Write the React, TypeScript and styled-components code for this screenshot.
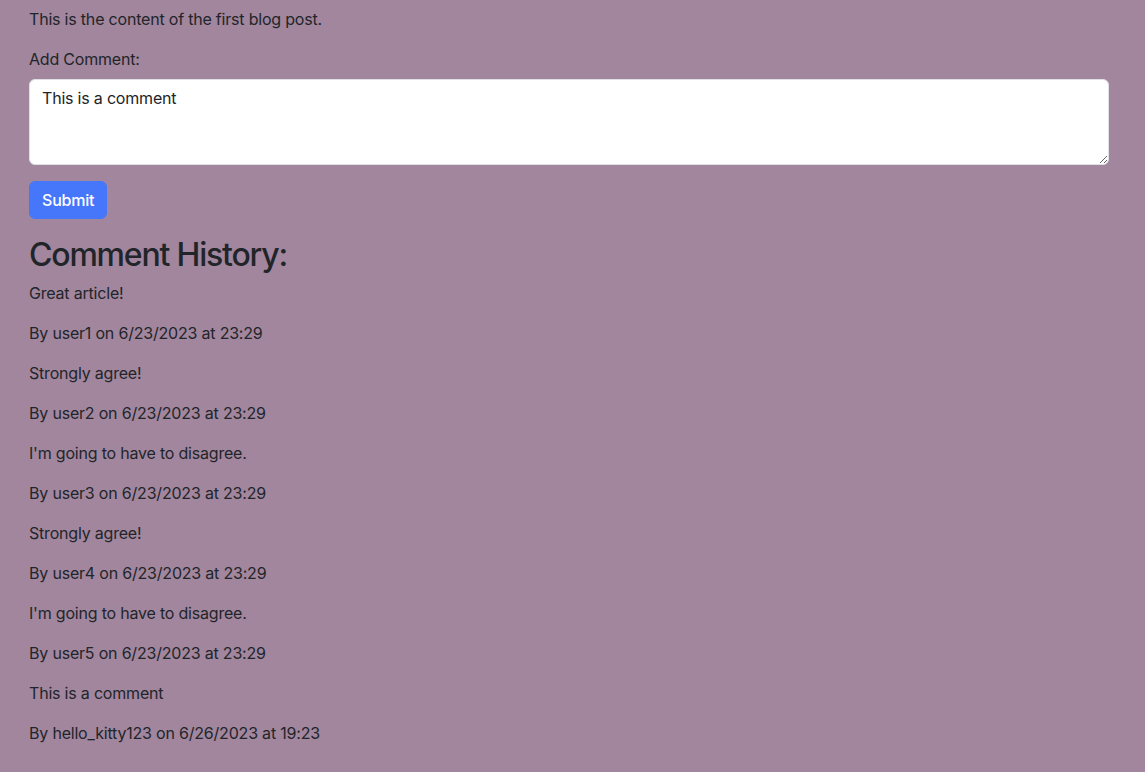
import React from "react";
import styled, { createGlobalStyle } from "styled-components";

const Global = createGlobalStyle`
  html, body { margin: 0; padding: 0; }
  body {
    background: #a1869e;
    color: #212529;
    font-family: Inter, "Liberation Sans", Arial, sans-serif;
    font-size: 16px;
    line-height: 24px;
    letter-spacing: -0.2px;
  }
  * { box-sizing: border-box; }
`;

const Page = styled.main`
  padding: 7px 36px 20px 29px;
  min-height: 772px;
`;

const Para = styled.p`
  margin: 0 0 16px;
`;

const Form = styled.form`
  display: flex;
  flex-direction: column;
  align-items: flex-start;
`;

const Label = styled.label`
  display: block;
  margin-bottom: 8px;
`;

const TextArea = styled.textarea`
  display: block;
  width: 100%;
  height: 86px;
  padding: 6px 12px;
  font: inherit;
  line-height: 24px;
  letter-spacing: -0.2px;
  color: #212529;
  background: #fff;
  border: 1px solid #dee2e6;
  border-radius: 6px;
  margin: 0 0 16px;
  resize: vertical;
  outline: none;
`;

const Button = styled.button`
  font: inherit;
  font-weight: 500;
  line-height: 24px;
  letter-spacing: -0.2px;
  color: #fff;
  background: #4677fb;
  border: 1px solid #4677fb;
  border-radius: 6px;
  padding: 6px 12px;
  cursor: pointer;
`;

const Heading = styled.h2`
  font-size: 32px;
  font-weight: 500;
  line-height: 38.4px;
  letter-spacing: -1.2px;
  margin: 17px 0 7px;
`;

const comments = [
  { text: "Great article!", user: "user1", date: "6/23/2023", time: "23:29" },
  { text: "Strongly agree!", user: "user2", date: "6/23/2023", time: "23:29" },
  { text: "I'm going to have to disagree.", user: "user3", date: "6/23/2023", time: "23:29" },
  { text: "Strongly agree!", user: "user4", date: "6/23/2023", time: "23:29" },
  { text: "I'm going to have to disagree.", user: "user5", date: "6/23/2023", time: "23:29" },
  { text: "This is a comment", user: "hello_kitty123", date: "6/26/2023", time: "19:23" },
];

export default function App() {
  return (
    <>
      <Global />
      <Page>
        <Para>This is the content of the first blog post.</Para>
        <Form onSubmit={(e) => e.preventDefault()}>
          <Label htmlFor="comment">Add Comment:</Label>
          <TextArea id="comment" rows={3} defaultValue="This is a comment" />
          <Button type="submit">Submit</Button>
        </Form>
        <Heading>Comment History:</Heading>
        {comments.map((c, i) => (
          <div key={i}>
            <Para>{c.text}</Para>
            <Para>
              By {c.user} on {c.date} at {c.time}
            </Para>
          </div>
        ))}
      </Page>
    </>
  );
}
